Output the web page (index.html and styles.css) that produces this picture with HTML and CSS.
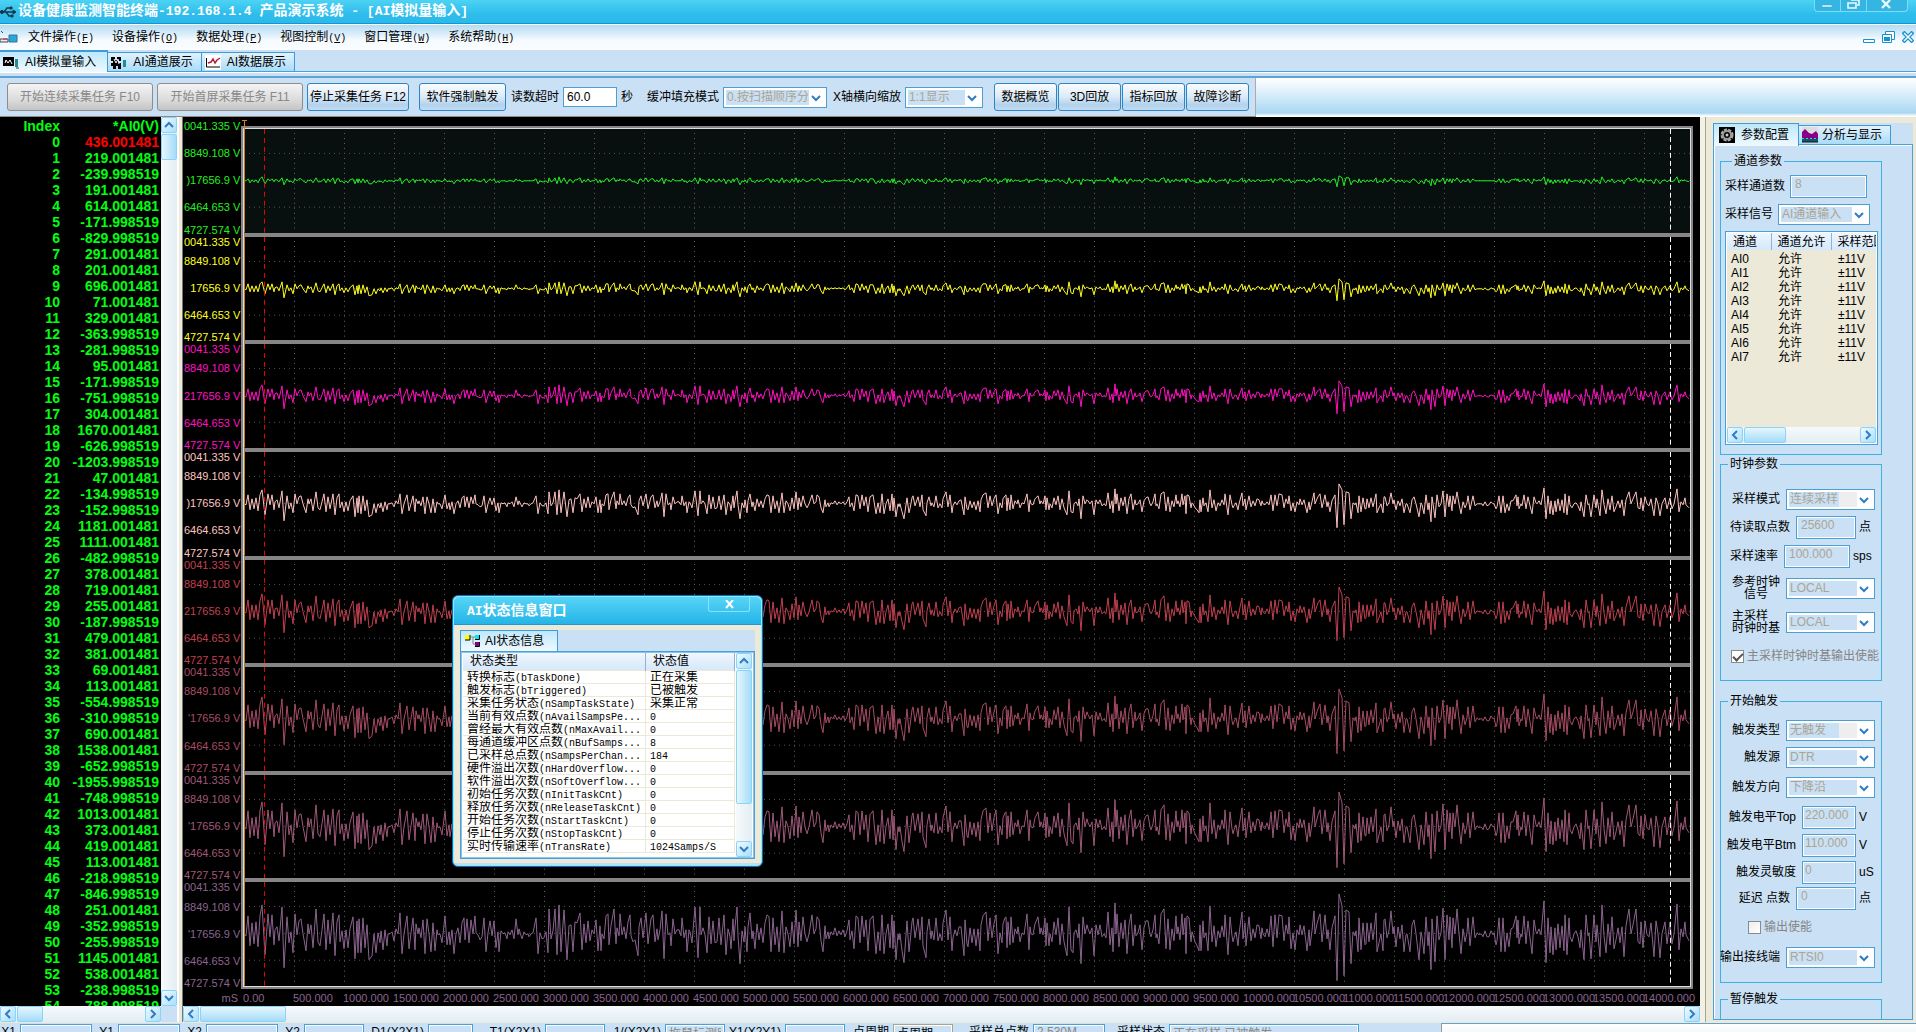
FILE: index.html
```html
<!DOCTYPE html>
<html lang="zh-CN">
<head>
<meta charset="utf-8">
<title>设备健康监测智能终端</title>
<link rel="stylesheet" href="styles.css">
</head>
<body>
<svg width="0" height="0" class="defs" aria-hidden="true">
  <symbol id="up" viewBox="0 0 10 8"><path d="M1 6l4-4 4 4" fill="none" stroke="#2f7cc4" stroke-width="2"/></symbol>
  <symbol id="down" viewBox="0 0 10 8"><path d="M1 2l4 4 4-4" fill="none" stroke="#2f7cc4" stroke-width="2"/></symbol>
  <symbol id="left" viewBox="0 0 8 10"><path d="M6 1L2 5l4 4" fill="none" stroke="#2f7cc4" stroke-width="2"/></symbol>
  <symbol id="right" viewBox="0 0 8 10"><path d="M2 1l4 4-4 4" fill="none" stroke="#2f7cc4" stroke-width="2"/></symbol>
</svg>
<div class="app">
  <header class="titlebar">
    <svg class="usb" width="17" height="12" viewBox="0 0 17 12" fill="none" stroke="#17384a"><path d="M0 6h15M4 6l3-4h3M6 6l3 4h3" stroke-width="1.4"/><circle cx="2" cy="6" r="1.6" fill="#17384a"/><path d="M13 4l3 2-3 2zM10 1h2v2h-2zM11 9h2v2h-2z" fill="#17384a"/></svg>
    <h1>设备健康监测智能终端<span class="m13">-192.168.1.4 </span>产品演示系统<span class="m13"> - [AI</span>模拟量输入<span class="m13">]</span></h1>
    <div class="winctl">
      <button aria-label="最小化"><svg width="12" height="9" viewBox="0 0 12 9"><path d="M1 5h10v2H1z" fill="#eaf9ff" stroke="#3a9fc8" stroke-width=".5"/></svg></button>
      <button aria-label="还原"><svg width="13" height="9" viewBox="0 0 13 9" fill="none" stroke="#eaf9ff" stroke-width="1.6"><path d="M4 0h8v5h-2M1 3h8v5H1z"/></svg></button>
      <button class="wide" aria-label="关闭"><svg width="10" height="9" viewBox="0 0 10 9"><path d="M1 0l8 8M9 0L1 8" stroke="#eaf9ff" stroke-width="2.4"/></svg></button>
    </div>
  </header>

  <nav class="menubar">
    <svg width="18" height="14" viewBox="0 0 18 14"><path d="M1 1l2 2M0 9h8v3H0z" stroke="#445" fill="#e8eef2"/><path d="M3 9h4" stroke="#c33"/><path d="M9 5h8v7H9z" fill="#25a9d8" stroke="#3d6f94"/></svg>
    <a href="#">文件操作<span class="m10">(<u>F</u>)</span></a>
    <a href="#">设备操作<span class="m10">(<u>O</u>)</span></a>
    <a href="#">数据处理<span class="m10">(<u>P</u>)</span></a>
    <a href="#">视图控制<span class="m10">(<u>V</u>)</span></a>
    <a href="#">窗口管理<span class="m10">(<u>W</u>)</span></a>
    <a href="#">系统帮助<span class="m10">(<u>H</u>)</span></a>
    <div class="mdictl">
      <button aria-label="最小化子窗口"><svg width="12" height="12" viewBox="0 0 12 12"><path d="M.5 8.5h11v3H.5z" fill="#fff" stroke="#1593cf"/></svg></button>
      <button aria-label="还原子窗口"><svg width="13" height="12" viewBox="0 0 13 12"><path d="M3.500.5h9v8h-9z" fill="#fff" stroke="#1593cf"/><path d="M.5 3.500h9v8h-9z" fill="#fff" stroke="#1593cf"/><path d="M2 6h6v4H2z" fill="#1593cf"/></svg></button>
      <button aria-label="关闭子窗口"><svg width="12" height="12" viewBox="0 0 12 12"><path d="M1 1l10 10M11 1L1 11" stroke="#1593cf" stroke-width="4"/><path d="M2 2l8 8M10 2l-8 8" stroke="#fff" stroke-width="1.5"/></svg></button>
    </div>
  </nav>

  <nav class="tabs">
    <a class="tab on" href="#"><svg width="16" height="15" viewBox="0 0 16 15"><path d="M0 2h11v9H0z"/><path d="M2 8l1-3 2 3 2-3 2 4" stroke="#fff" fill="none"/><path d="M12 4h3v8h-3z" fill="#1b8f95"/><path d="M13 12h3v2h-3z" fill="#999"/></svg>AI模拟量输入</a>
    <a class="tab" href="#"><svg width="16" height="15" viewBox="0 0 16 15"><path d="M0 2h4v4H0zM6 2h4v4H6zM0 8h10v3H0zM2 11h3v3H2zM7 11h3v3H7zM2 5h6v4H2z"/><path d="M3 4l2 4 2-4 1 5" stroke="#fff" fill="none"/><path d="M12 5h3v7h-3z" fill="#1b8f95"/></svg>AI通道展示</a>
    <a class="tab" href="#"><svg width="16" height="15" viewBox="0 0 16 15"><path d="M0 0h16v15H0z" fill="#fff"/><path d="M1.500 3v9H15" stroke="#000" fill="none"/><path d="M3 8l3-1 2-3 2 4 2-3 3-2" stroke="#b0203a" stroke-width="1.500" fill="none"/></svg>AI数据展示</a>
  </nav>

  <div class="toolbar">
    <div class="band">
      <button class="btn xl" disabled>开始连续采集任务 F10</button>
      <button class="btn xl" disabled>开始首屏采集任务 F11</button>
      <button class="btn lg">停止采集任务 F12</button>
      <button class="btn md">软件强制触发</button>
      <label for="tmo">读数超时</label>
      <input id="tmo" class="box live w54" value="60.0">
      <span class="unit-s">秒</span>
      <label for="fill">缓冲填充模式</label>
      <span class="sel w104"><select id="fill" disabled><option>0.按扫描顺序分</option></select><svg width="10" height="8"><use href="#down"/></svg></span>
      <label for="xs">X轴横向缩放</label>
      <span class="sel w78"><select id="xs" disabled><option>1:1显示</option></select><svg width="10" height="8"><use href="#down"/></svg></span>
      <div class="btns">
        <button class="btn sm">数据概览</button><button class="btn sm">3D回放</button><button class="btn sm">指标回放</button><button class="btn sm">故障诊断</button>
      </div>
    </div>
  </div>

  <main class="main">
    <section class="list">
      <div class="listbody">
        <table class="data"><thead><tr><th>Index</th><th>*AI0(V)</th></tr></thead><tbody id="rows"></tbody></table>
        <div class="sb v"><button aria-label="向上"><svg width="10" height="8"><use href="#up"/></svg></button><div class="thumb t26"></div><i></i><button aria-label="向下"><svg width="10" height="8"><use href="#down"/></svg></button></div>
      </div>
      <div class="listfoot"><div class="sb h"><button aria-label="向左"><svg width="8" height="10"><use href="#left"/></svg></button><div class="thumb t26"></div><i></i><button aria-label="向右"><svg width="8" height="10"><use href="#right"/></svg></button></div></div>
    </section>
    <div class="split"></div>
    <section class="chart">
      <div class="canvas">
        <div class="ylabels" id="ylabels"></div>
        <div class="plot"><div class="lanes" id="lanes"></div>
          <svg class="mark" width="7" height="10" viewBox="0 0 7 10"><path d="M1 .5h5M3.500 0v10" stroke="#d08a20" fill="none"/></svg>
        </div>
        <div class="ms">mS</div>
        <div class="xaxis" id="xaxis"></div>
      </div>
      <div class="sb h"><button aria-label="向左"><svg width="8" height="10"><use href="#left"/></svg></button><div class="thumb t86"></div><i></i><button aria-label="向右"><svg width="8" height="10"><use href="#right"/></svg></button></div>

      <div class="dialog" role="dialog" aria-label="AI状态信息窗口">
        <div class="dtitle"><h2><span class="m13">AI</span>状态信息窗口</h2><button aria-label="关闭"><svg width="9" height="9" viewBox="0 0 9 9"><path d="M1 0l7 8M8 0L1 8" stroke="#fff" stroke-width="2"/></svg></button></div>
        <div class="dbody">
          <div class="dtabs"><a class="tab on" href="#"><svg width="17" height="14" viewBox="0 0 17 14"><path d="M1 1h5v5H1z" fill="#ff0"/><path d="M6 1v5H1" fill="none" stroke="#000"/><path d="M7 3h4M9 3v7h2" stroke="#888" fill="none"/><path d="M11 1h4v4h-4z" fill="#00e8f0"/><path d="M15.500 1v4.500H11" stroke="#000" fill="none"/><path d="M11 8h4v4h-4z" fill="#808"/><path d="M15.500 8v4.500H11" stroke="#000" fill="none"/></svg>AI状态信息</a></div>
          <div class="dlist">
            <table class="status">
              <thead><tr><th>状态类型</th><th>状态值</th></tr></thead>
              <tbody>
              <tr><td>转换标志<span class="m10">(bTaskDone)</span></td><td>正在采集</td></tr>
              <tr><td>触发标志<span class="m10">(bTriggered)</span></td><td>已被触发</td></tr>
              <tr><td>采集任务状态<span class="m10">(nSampTaskState)</span></td><td>采集正常</td></tr>
              <tr><td>当前有效点数<span class="m10">(nAvailSampsPe...</span></td><td><span class="m10">0</span></td></tr>
              <tr><td>曾经最大有效点数<span class="m10">(nMaxAvail...</span></td><td><span class="m10">0</span></td></tr>
              <tr><td>每通道缓冲区点数<span class="m10">(nBufSamps...</span></td><td><span class="m10">8</span></td></tr>
              <tr><td>已采样总点数<span class="m10">(nSampsPerChan...</span></td><td><span class="m10">184</span></td></tr>
              <tr><td>硬件溢出次数<span class="m10">(nHardOverflow...</span></td><td><span class="m10">0</span></td></tr>
              <tr><td>软件溢出次数<span class="m10">(nSoftOverflow...</span></td><td><span class="m10">0</span></td></tr>
              <tr><td>初始任务次数<span class="m10">(nInitTaskCnt)</span></td><td><span class="m10">0</span></td></tr>
              <tr><td>释放任务次数<span class="m10">(nReleaseTaskCnt)</span></td><td><span class="m10">0</span></td></tr>
              <tr><td>开始任务次数<span class="m10">(nStartTaskCnt)</span></td><td><span class="m10">0</span></td></tr>
              <tr><td>停止任务次数<span class="m10">(nStopTaskCnt)</span></td><td><span class="m10">0</span></td></tr>
              <tr><td>实时传输速率<span class="m10">(nTransRate)</span></td><td><span class="m10">1024Samps/S</span></td></tr>
              </tbody>
            </table>
            <div class="sb v"><button aria-label="向上"><svg width="10" height="8"><use href="#up"/></svg></button><div class="thumb t134"></div><i></i><button aria-label="向下"><svg width="10" height="8"><use href="#down"/></svg></button></div>
          </div>
        </div>
      </div>
    </section>

    <aside class="side">
      <div class="stabs">
        <a class="tab on" href="#"><svg width="16" height="16" viewBox="0 0 16 16"><path d="M0 0h16v16H0z"/><circle cx="8" cy="8" r="5" fill="none" stroke="#aaa" stroke-width="3" stroke-dasharray="3 1"/><circle cx="8" cy="8" r="4" fill="none" stroke="#999" stroke-width="2"/><circle cx="8" cy="8" r="1.500" fill="#ccc"/></svg>参数配置</a>
        <a class="tab" href="#"><svg width="16" height="16" viewBox="0 0 16 16"><path d="M0 0h16v16H0z" fill="#ddd"/><path d="M0 5l3-3 4 4 3 1 4-3 2 3v6H0z" fill="#808"/><path d="M0 12h16v3H0z" fill="#0a5a6a"/><path d="M0 11.500h16" stroke="#2dd" stroke-dasharray="2 2"/><path d="M0 15h16" stroke="#111"/></svg>分析与显示</a>
      </div>
      <div class="panel">
        <fieldset class="g1"><legend>通道参数</legend>
          <div class="row r30 start"><label for="n">采样通道数</label><input id="n" class="box w77" value="8" disabled></div>
          <div class="row r26 start"><label for="s">采样信号</label><span class="sel w92"><select id="s" disabled><option>AI通道输入</option></select><svg width="10" height="8"><use href="#down"/></svg></span></div>
          <div class="chan">
            <div class="chanview"><table><thead><tr><th>通道</th><th>通道允许</th><th>采样范围</th></tr></thead><tbody>
              <tr><td>AI0</td><td>允许</td><td>±11V</td></tr>
              <tr><td>AI1</td><td>允许</td><td>±11V</td></tr>
              <tr><td>AI2</td><td>允许</td><td>±11V</td></tr>
              <tr><td>AI3</td><td>允许</td><td>±11V</td></tr>
              <tr><td>AI4</td><td>允许</td><td>±11V</td></tr>
              <tr><td>AI5</td><td>允许</td><td>±11V</td></tr>
              <tr><td>AI6</td><td>允许</td><td>±11V</td></tr>
              <tr><td>AI7</td><td>允许</td><td>±11V</td></tr>
            </tbody></table></div>
            <div class="sb h"><button aria-label="向左"><svg width="8" height="10"><use href="#left"/></svg></button><div class="thumb t42"></div><i></i><button aria-label="向右"><svg width="8" height="10"><use href="#right"/></svg></button></div>
          </div>
        </fieldset>
        <fieldset class="g2"><legend>时钟参数</legend>
          <div class="row r30"><label for="m">采样模式</label><span class="sel act w89"><select id="m" disabled><option>连续采样</option></select><svg width="10" height="8"><use href="#down"/></svg></span></div>
          <div class="row r26"><label for="p">待读取点数</label><input id="p" class="box w60" value="25600" disabled><span class="unit">点</span></div>
          <div class="row r32"><label for="r">采样速率</label><input id="r" class="box w66" value="100.000" disabled><span class="unit u22">sps</span></div>
          <div class="row r32"><label for="rc" class="two c">参考时钟<br>信号</label><span class="sel w89"><select id="rc" disabled><option>LOCAL</option></select><svg width="10" height="8"><use href="#down"/></svg></span></div>
          <div class="row r36"><label for="mc" class="two">主采样<br>时钟时基</label><span class="sel w89"><select id="mc" disabled><option>LOCAL</option></select><svg width="10" height="8"><use href="#down"/></svg></span></div>
          <label class="row r32 tick"><input type="checkbox" checked disabled>主采样时钟时基输出使能</label>
        </fieldset>
        <fieldset class="g3"><legend>开始触发</legend>
          <div class="row r26"><label for="tt">触发类型</label><span class="sel act w89"><select id="tt" disabled><option>无触发</option></select><svg width="10" height="8"><use href="#down"/></svg></span></div>
          <div class="row r28"><label for="ts">触发源</label><span class="sel w89"><select id="ts" disabled><option>DTR</option></select><svg width="10" height="8"><use href="#down"/></svg></span></div>
          <div class="row r32"><label for="td">触发方向</label><span class="sel w89"><select id="td" disabled><option>下降沿</option></select><svg width="10" height="8"><use href="#down"/></svg></span></div>
          <div class="row r28"><label for="t1">触发电平Top</label><input id="t1" class="box w54" value="220.000" disabled><span class="unit">V</span></div>
          <div class="row r28"><label for="t2">触发电平Btm</label><input id="t2" class="box w54" value="110.000" disabled><span class="unit">V</span></div>
          <div class="row r26"><label for="t3">触发灵敏度</label><input id="t3" class="box w54" value="0" disabled><span class="unit">uS</span></div>
          <div class="row r26"><label for="t4">延迟 点数</label><input id="t4" class="box w60" value="0" disabled><span class="unit">点</span></div>
          <label class="row r32 tick mid"><input type="checkbox" disabled>输出使能</label>
          <div class="row r28"><label for="o">输出接线端</label><span class="sel w89"><select id="o" disabled><option>RTSI0</option></select><svg width="10" height="8"><use href="#down"/></svg></span></div>
        </fieldset>
        <fieldset class="g4"><legend>暂停触发</legend></fieldset>
      </div>
    </aside>
  </main>

  <footer class="statusbar">
    <label for="b1" class="l20">X1</label><input id="b1" class="box w72" disabled>
    <label for="b2" class="l26">Y1</label><input id="b2" class="box w62" disabled>
    <label for="b3" class="l26">X2</label><input id="b3" class="box w72" disabled>
    <label for="b4" class="l26">Y2</label><input id="b4" class="box w60" disabled>
    <label for="b5" class="l64">D1(X2X1)</label><input id="b5" class="box w45" disabled>
    <label for="b6" class="l72">T1(X2X1)</label><input id="b6" class="box w60" disabled>
    <label for="b7" class="l60">1/(X2Y1)</label><input id="b7" class="box w60" value="拖鼠标测距" disabled>
    <label for="b8" class="l60">Y1(X2Y1)</label><input id="b8" class="box w60" disabled>
    <label for="b9" class="l48">点周期</label><input id="b9" class="box flat w60" value="点周期">
    <label for="b10" class="l80">采样总点数</label><input id="b10" class="box w72" value="2.530M" disabled>
    <label for="b11" class="l64">采样状态</label><input id="b11" class="box w190" value="正在采样.已被触发" disabled>
    <div class="rest"></div>
  </footer>
</div>
<script src="script.js"></script>
</body>
</html>
```
FILE: styles.css
```css
* { box-sizing: border-box; }
body {
  margin: 0; height: 100vh; overflow: hidden;
  font: 12px/14px "Liberation Sans", "Noto Sans CJK SC", sans-serif;
  color: #000; background: #cae0f4;
}
button, input, select { font: inherit; color: inherit; margin: 0; padding: 0; border: 0; background: none; border-radius: 0; }
a { color: inherit; text-decoration: none; }
svg { display: block; flex: none; }
.defs { position: absolute; }
h1, h2 { margin: 0; font-size: 14px; line-height: 16px; color: #fff; font-weight: bold; white-space: pre; }
.m13 { font-family: "Liberation Mono", monospace; font-size: 13px; }
.m10 { font-family: "Liberation Mono", monospace; font-size: 10px; line-height: 1px; }

/* the status bar runs past the lower edge of the window */
.app { height: calc(100vh + 14px); display: flex; flex-direction: column; }

.titlebar {
  flex: 0 0 24px; display: flex; align-items: center; gap: 1px;
  background: linear-gradient(#4cd3f4, #2fbdec 60%, #2cb9ea); border-bottom: 1px solid #0b9bd4;
}
.titlebar h1 { flex: 1; padding-bottom: 2px; }
.winctl { align-self: flex-start; display: flex; height: 12px; margin-right: 8px; border: 1px solid #79dcf8; border-top: 0; border-radius: 0 0 4px 4px; background: #35b6e2; }
.winctl button { width: 26px; padding-left: 6px; border-right: 1px solid #79dcf8; }
.winctl .wide { width: 40px; padding-left: 14px; border: 0; }
.winctl svg { margin-top: -3px; }

.menubar {
  flex: 0 0 26px; display: flex; align-items: center; gap: 18px;
  background: linear-gradient(#fff 0 1px, #b6dcf3 1px, #dbeefa 40%, #f4fafe 60%, #fbfdff);
}
.menubar > svg { margin-right: -8px; }
.menubar a { white-space: nowrap; }
.mdictl { margin-left: auto; display: flex; gap: 7px; padding-right: 2px; }

.tabs { flex: 0 0 22px; display: flex; align-items: flex-end; border-bottom: 1px solid #47a0d8; }
.tab {
  display: flex; align-items: center; gap: 4px; height: 19px; padding: 0 8px 0 3px; white-space: nowrap;
  background: linear-gradient(#e2f2fd, #a9dcf8); border: 1px solid #3c9bdb; border-left: 0; border-bottom: 0;
}
.tab.on { height: 21px; background: linear-gradient(#bfe8fb, #f0f9fe); border-top-width: 2px; }
.tabs .tab { gap: 6px; }
.tabs .on { margin-bottom: -1px; height: 22px; padding-right: 11px; }

.toolbar {
  flex: 0 0 45px; display: flex; border-top: 1px solid #fff;
  background: linear-gradient(#cae0f4 0 3px, #5fa3d6 3px 5px, #fff 5px, #f4fafe 10px, #a9d8f2 40px, #fff 43px);
}
.band {
  display: flex; align-items: center; flex: 0 0 auto; margin-top: 5px; padding-left: 7px; white-space: nowrap;
  padding-right: 6px; border-right: 1px solid #aaa; border-bottom: 1px solid #8c8c84; background: #cae0f4; gap: 4px;
}
.btn {
  height: 28px; border: 1px solid #2c86c6; border-radius: 3px; white-space: nowrap;
  background: linear-gradient(#fafcfe, #dbeaf7 50%, #b2d2ec 80%, #c3dcf1);
}
.btn:disabled { color: #888; border-color: #8d8d8d; background: linear-gradient(#f4f4f4, #dcdcdc 60%, #c4c4c4); }
.xl { width: 146px; }
.lg { width: 102px; }
.md { width: 87px; margin: 0 1px 0 6px; }
.sm { width: 63px; }
.btns { display: flex; gap: 1px; margin-left: 7px; }
.unit-s { padding-right: 10px; }
.band .w104 { margin-right: 2px; }

.box { height: 23px; border: 1px solid #4a9fd4; box-shadow: inset 0 0 0 1px #fff; padding: 0 4px 4px; color: #aaa595; background: #cae0f4; min-width: 0; }
.box.live { height: 20px; padding: 0 3px; background: #fff; color: #000; }
.row .w54 { padding: 0 2px 4px; }
.sel { position: relative; display: flex; align-items: center; height: 21px; border: 1px solid #4a9fd4; background: #fff; }
.sel select { appearance: none; flex: 1; min-width: 0; height: 15px; margin: 2px 17px 2px 2px; padding: 0 1px; line-height: 15px; color: #aaa595; background: #cae0f4; opacity: 1; overflow: hidden; }
.sel svg { position: absolute; right: 5px; top: 6px; pointer-events: none; }
.sel.act select { background: linear-gradient(90deg, #cae0f4 50px, #eee 50px); }
.w45 { width: 45px; } .w54 { width: 54px; } .w60 { width: 60px; } .w62 { width: 62px; } .w66 { width: 66px; }
.w72 { width: 72px; } .w77 { width: 77px; } .w78 { width: 78px; } .w89 { width: 89px; } .w92 { width: 92px; }
.w104 { width: 104px; } .w190 { width: 190px; }

.main { flex: 1; min-height: 0; display: flex; }

/* scroll bars */
.sb { display: flex; background: linear-gradient(90deg, #f6fafc, #e3edf2); }
.sb.v { flex-direction: column; width: 16px; }
.sb.h { height: 16px; background: linear-gradient(#f6fafc, #e3edf2); }
.sb button { flex: 0 0 16px; display: flex; align-items: center; justify-content: center; border: 1px solid #8ad4fa; border-radius: 2px; background: linear-gradient(135deg, #f0faff, #a9defa); }
.sb i { flex: 1; }
.thumb { border: 1px solid #8ad4fa; border-radius: 2px; background: linear-gradient(#e6f6fe, #a4dcf9); }
.v .thumb { margin: 1px 0; background: linear-gradient(90deg, #e6f6fe, #a4dcf9); }
.h .thumb { margin: 0 1px; }
.t26 { flex: 0 0 26px; } .t42 { flex: 0 0 42px; } .t86 { flex: 0 0 86px; } .t134 { flex: 0 0 134px; }

.list { flex: 0 0 177px; display: flex; flex-direction: column; background: #000; }
.listbody { flex: 1; min-height: 0; display: flex; overflow: hidden; }
.data { flex: 1; border-collapse: collapse; align-self: flex-start; table-layout: fixed; font-weight: bold; font-size: 14px; line-height: 16px; color: #00ff10; margin-top: 1px; }
.data th, .data td { padding: 0; text-align: right; height: 16px; }
.data th:first-child { width: 60px; }
.data th:last-child, .data td:last-child { padding-right: 2px; }
.data .hot td:last-child { color: #f00; }
.listfoot { background: #cae0f4; padding-right: 16px; }
.split { flex: 0 0 6px; background: linear-gradient(90deg, #fff 2px, #ece9d8 2px 5px, #777 5px); }

.chart { position: relative; flex: 1; min-width: 0; display: flex; flex-direction: column; }
.canvas { flex: 1; min-height: 0; display: grid; grid-template: minmax(0, 1fr) 17px / 58px minmax(0, 1fr); padding: 9px 7px 0 0; background: #000; font-size: 11px; line-height: 11px; }
.ylabels { display: flex; flex-direction: column; gap: 4px; padding: 3px 2px 3px 1px; }
.ylane { flex: 1; display: grid; grid-template-rows: 11fr 27fr 27fr 27fr 11fr; align-items: center; justify-items: end; white-space: nowrap; }
.ylane :last-child { align-self: end; margin-bottom: -3px; }
.ylane:first-child :first-child { align-self: start; margin-top: -8px; }
.plot { position: relative; border: 2px solid #868484; padding: 1px; background: #dcdcdc; }
.lanes { height: 100%; display: flex; flex-direction: column; gap: 4px; background: #868484; }
.lane { flex: 1; min-height: 0; width: 100%; background: #000; }
.lane:first-child { background: #08100f; }
.mark { position: absolute; left: -2px; top: -8px; }
.ms { text-align: right; padding: 4px 3px 0 0; color: #8c6490; }
.xaxis { display: grid; grid-template-columns: repeat(29, minmax(0, 1fr)); padding: 4px 0 0 2px; color: #8c6490; white-space: nowrap; }

.dialog { position: absolute; left: 269px; top: 478px; width: 311px; height: 272px; display: flex; flex-direction: column; border: 1px solid #0a6fb8; border-radius: 6px; background: #c3dcf2; box-shadow: inset 0 0 0 1px #7ff0ff; padding: 1px 1px 3px; }
.dtitle { flex: 0 0 28px; display: flex; justify-content: space-between; padding-left: 13px; border-radius: 5px 5px 0 0; background: linear-gradient(#56d4f6, #25b4e8); border-bottom: 1px solid #1c9ad0; }
.dtitle h2 { padding-top: 5px; }
.dtitle button { width: 42px; height: 15px; margin-right: 11px; padding-left: 16px; border: 1px solid #86e4fa; border-top: 0; border-radius: 0 0 3px 3px; }
.dbody { flex: 1; min-height: 0; display: flex; flex-direction: column; padding: 5px 6px 4px; background: #ece9d8; }
.dtabs { flex: 0 0 21px; display: flex; background: #cae0f4; }
.dtabs .tab, .stabs .tab { border-left: 1px solid #3c9bdb; }
.dtabs .on { width: 98px; border-top-width: 1px; position: relative; }
.dlist { flex: 1; min-height: 0; display: flex; border: 1px solid #47a0d8; padding: 1px 2px; background: #fff; box-shadow: inset 0 0 0 1px #8cc3e8; }
.status { flex: 1; border-collapse: collapse; table-layout: fixed; align-self: flex-start; line-height: 12px; margin-right: 1px; }
.status th { height: 17px; padding: 0 7px; text-align: left; font-weight: normal; background: linear-gradient(#f0f7fe, #d5e8fa); border-right: 1px solid #8bb4dc; }
.status th:first-child { width: 179px; }
.status td { height: 13px; padding: 0 4px; white-space: nowrap; overflow: hidden; border: 1px solid #ece9d8; border-left: 0; }

.side { flex: 0 0 216px; min-width: 0; display: flex; flex-direction: column; padding: 6px 3px 2px 8px; border-left: 5px solid #f3f1e6; background: #ece9d8; box-shadow: inset 1px 0 #a8a490; }
.stabs { flex: 0 0 21px; display: flex; align-items: flex-end; background: #cae0f4; }
.stabs .on { width: 86px; height: 23px; margin-bottom: -2px; padding-left: 5px; gap: 6px; position: relative; border-top-width: 1px; }
.stabs .tab:last-child { width: 92px; gap: 4px; border-left: 0; }
.panel { flex: 1; min-height: 0; overflow: hidden; padding: 9px 30px 0 6px; background: #cae0f4; border: 1px solid #47a0d8; box-shadow: inset 1px 1px #fff; }
fieldset { margin: 0 0 2px; padding: 0 6px 0 0; border: 1px solid #3fb0e0; min-width: 0; }
legend { margin-left: 7px; padding: 0 2px; line-height: 14px; }
.g1 { height: 301px; padding: 3px 3px 0 4px; }
.g2 { height: 224px; padding-top: 13px; margin-bottom: 13px; }
.g3 { height: 289px; padding-top: 9px; margin-bottom: 9px; }
.g4 { height: 40px; }
.row { display: flex; align-items: center; justify-content: flex-end; gap: 6px; white-space: nowrap; }
.row > * { flex: none; }
.start { justify-content: flex-start; gap: 5px; }
.r26 { height: 26px; } .r28 { height: 28px; } .r30 { height: 30px; } .r32 { height: 32px; } .r36 { height: 36px; }
.unit { width: 16px; margin-left: -3px; }
.u22 { width: 22px; }
.two { line-height: 12px; }
.c { text-align: center; }
.tick { color: #858585; gap: 3px; justify-content: flex-start; padding-left: 10px; }
.mid { padding-left: 27px; }
.tick input { appearance: none; width: 13px; height: 13px; border: 1px solid #8a8a8a; background: linear-gradient(135deg, #eee, #fff); }
.tick input:checked { background: #fff; }
.tick input:checked::after { content: ""; display: block; width: 8px; height: 4px; margin: 2px 0 0 1px; border: solid #555; border-width: 0 0 2px 2px; transform: rotate(-45deg); }
.chan { height: 214px; margin-top: 4px; display: flex; flex-direction: column; border: 1px solid #47a0d8; padding: 1px; background: #ece9d8; box-shadow: inset 0 0 0 1px #fff; }
.chanview { flex: 1; min-height: 0; overflow: hidden; }
.chan table { border-collapse: collapse; table-layout: fixed; width: 180px; }
.chan th { height: 17px; padding: 0 0 0 6px; text-align: left; font-weight: normal; white-space: nowrap; background: linear-gradient(#eef6fe, #d5e8fa); border-right: 1px solid #8bb4dc; }
.chan th:first-child { width: 44px; }
.chan th:nth-child(2) { width: 60px; }
.chan td { height: 14px; padding: 0 0 0 7px; line-height: 14px; }
.chan td:first-child { padding-left: 4px; }
.chan tr:first-child td { height: 16px; padding-top: 2px; }

.statusbar { flex: 0 0 24px; display: flex; padding-top: 1px; border-top: 1px solid #ece9d8; white-space: nowrap; }
.statusbar label { flex: none; padding: 1px 4px 0 0; text-align: right; }
.statusbar .box { flex: none; height: 20px; padding: 0 3px 4px; color: #888; }
.statusbar .flat { border-color: #a8a490; color: #000; }
.l20 { width: 20px; } .l26 { width: 26px; } .l48 { width: 48px; } .l60 { width: 60px; } .l64 { width: 64px; } .l72 { width: 72px; } .l80 { width: 80px; }
.rest { flex: 1; margin: -1px 0 0 82px; border-left: 1px solid #999; background: linear-gradient(#5fa3d6 1px, #fff 1px, #dff0fa); }
```
FILE: script.js
```js
// sample table
const values = [436,219,-240,191,614,-172,-830,291,201,696,71,329,-364,-282,95,-172,-752,304,1670,-627,
  -1204,47,-135,-153,1181,1111,-483,378,719,255,-188,479,381,69,113,-555,-311,690,1538,-653,
  -1956,-749,1013,373,419,113,-219,-847,251,-353,-256,1145,538,-239,-789];
document.getElementById('rows').innerHTML = values.map((v, i) =>
  `<tr${i ? '' : ' class="hot"'}><td>${i}</td><td>${(v + 0.001481).toFixed(6)}</td></tr>`).join('');

// time axis, in milliseconds
document.getElementById('xaxis').innerHTML = Array.from({ length: 29 }, (_, i) =>
  `<span>${i ? i * 500 + '.000' : '0.00'}</span>`).join('');

// peaks of the vibration signal: time position, amplitude at full gain
const peaks = [18,29,21,-21,24,20,38,27,40,-34,43,17,51,20,62,-17,72,25,80,20,89,21,91,-22,109,17,111,-25,
  125,-26,128,-22,156,21,158,-20,163,18,169,16,171,-16,191,-17,201,18,210,-20,223,15,240,16,242,-18,272,15,
  292,16,294,-20,304,-19,305,25,311,25,313,-21,315,29,317,-18,320,24,323,-26,336,21,354,-17,364,20,370,25,
  386,19,394,-22,402,21,409,19,418,23,420,-25,451,27,454,-24,456,27,463,-19,480,19,482,-21,493,27,496,-30,
  506,21,525,17,538,23,552,24,568,19,579,-18,614,16,629,18,632,-20,652,-26,660,-29,663,13,674,15,682,-24,
  685,15,702,24,720,-22,742,22,752,19,754,-20,783,20,794,17,823,-22,825,27,837,-30,850,-22,864,22,871,31,
  883,-20,887,20,920,25,932,18,955,-17,966,28,984,-21,998,22,1005,17,1038,18,1063,-17,1070,23,1076,20,
  1081,19,1091,18,1093,-47,1095,40,1098,28,1100,-42,1102,24,1105,22,1107,-30,1114,-18,1132,21,1147,23,
  1166,-18,1175,-26,1180,-20,1187,-36,1191,-28,1199,26,1201,-26,1213,25,1229,17,1255,16,1272,18,1288,-20,
  1300,33,1302,-29,1304,16,1309,-21,1323,-21,1340,-26,1342,19,1347,-25,1350,19,1356,-23,1358,29,1368,17,
  1380,-23,1385,25,1392,25,1410,-23,1416,-24,1421,12,1426,12,1433,30,1437,5,1441,12,1445,-7];

let seed = 20;
const rnd = () => (seed = (seed * 16807) % 2147483647) / 2147483647;
const at = new Map();
for (let i = 0; i < peaks.length; i += 2) at.set(peaks[i], peaks[i + 1]);
const signal = [];
const calm = [[255, 290], [585, 605], [1230, 1250]];
let side = 1;
for (let x = 0; x < 1446; x++) {
  if (at.has(x)) { signal.push([x, at.get(x)]); side = at.get(x) > 0 ? -1 : 1; continue; }
  const last = signal.length ? signal[signal.length - 1][0] : -2;
  if (x - last < 2 && rnd() < 0.8) continue;
  if (at.has(x + 1)) continue;
  const quiet = calm.some(([a, b]) => x > a && x < b) ? 0.3 : 1;
  signal.push([x, side * Math.pow(rnd(), 1.3) * 20 * quiet]);
  if (rnd() < 0.85) side = -side;
}

const colors = ['#20f020', '#ffff20', '#ff10c0', '#ffc4c0', '#c04050', '#a84c64', '#a05878', '#8c6490'];
const lead = [')', '', '2', ')', '2', "'", "'", "'"];
let lanes = '', labels = '';
colors.forEach((c, n) => {
  const pts = signal.map(([x, v]) => x + ',' + Math.round(52 - v * (n + 1) / 8)).join(' ');
  let grid = '';
  for (let k = 1; k <= 28; k++) grid += `M${k * 50}.5 4V104`;
  lanes += `<svg class="lane" viewBox="0 0 1446 104" preserveAspectRatio="none" fill="none" shape-rendering="crispEdges">
    <path d="${grid}" stroke="#666" stroke-dasharray="1 4"/>
    <path d="M0 24.5H1446M0 51.5H1446M0 78.5H1446" stroke="#555" stroke-dasharray="1 4"/>
    <polyline points="${pts}" stroke="${c}"/>
    <path d="M.5 0V104" stroke="#c07c18"/>
    <path d="M20.5 0V104" stroke="#f00000" stroke-dasharray="5 4"/>
    <path d="M1426.5 0V104" stroke="#fff" stroke-dasharray="5 3"/></svg>`;
  labels += `<div class="ylane" style="color:${c}"><span>0041.335 V</span><span>8849.108 V</span><span>${lead[n]}17656.9 V</span><span>6464.653 V</span><span>4727.574 V</span></div>`;
});
document.getElementById('lanes').innerHTML = lanes;
document.getElementById('ylabels').innerHTML = labels;
```
